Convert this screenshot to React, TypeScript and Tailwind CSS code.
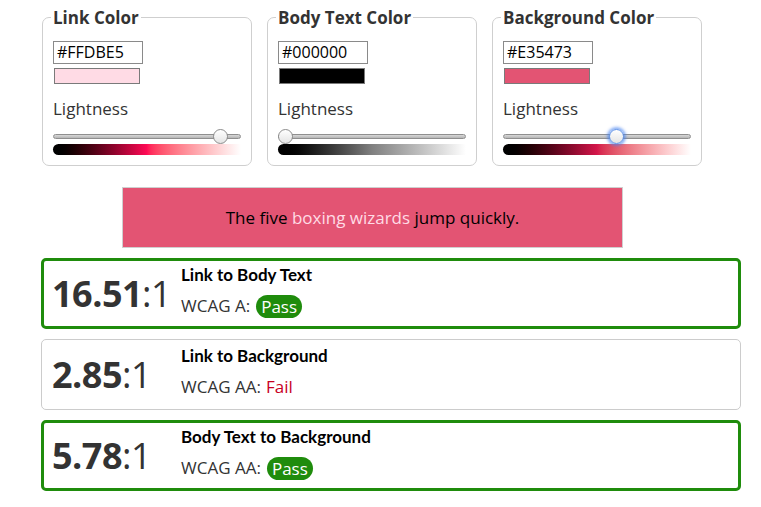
import React from "react";

type Box = {
  label: string;
  hex: string;
  swatch: string;
  grad: string;
  thumb: string;
  focus: boolean;
};

const boxes: Box[] = [
  {
    label: "Link Color",
    hex: "#FFDBE5",
    swatch: "bg-[#FFDBE5]",
    grad: "bg-linear-to-r from-black via-[#ff0a55] to-white",
    thumb: "left-[160px]",
    focus: false,
  },
  {
    label: "Body Text Color",
    hex: "#000000",
    swatch: "bg-black",
    grad: "bg-linear-to-r from-black via-[#808080] to-white",
    thumb: "left-0",
    focus: false,
  },
  {
    label: "Background Color",
    hex: "#E35473",
    swatch: "bg-[#E35473]",
    grad: "bg-linear-to-r from-black via-[#d4164a] to-white",
    thumb: "left-[106px]",
    focus: true,
  },
];

function ColorBox({ b }: { b: Box }) {
  return (
    <fieldset className="w-[210px] border border-[#cfcfcf] rounded-[7px] px-[10px] pb-[10px] pt-0 m-0">
      <legend className="px-[2px] -ml-[2px] text-[17px] leading-[23px] font-bold text-[#333]">
        {b.label}
      </legend>
      <div className="flex flex-col">
        <div className="mt-[12px] w-[90px] h-[23px] border border-[#8a8a8a] pl-[3px] text-[16px] leading-[21px] text-black">
          {b.hex}
        </div>
        <div className={`mt-[4px] ml-[1px] w-[86px] h-[16px] border border-[#7a7a7a] ${b.swatch}`} />
        <div className="mt-[13px] text-[17px] leading-[23px] text-[#333]">Lightness</div>
        <div className="relative mt-[9px] h-[15px] flex items-center">
          <div className="w-full h-[5px] rounded-full border border-[#8f8f8f] bg-linear-to-b from-[#d8d8d8] to-[#b5b5b5]" />
          {b.focus ? (
            <div
              className={`absolute top-0 ${b.thumb} w-[15px] h-[15px] rounded-full border border-[#5a8ee6] bg-linear-to-b from-white to-[#e4e4e4] shadow-[0_0_3px_2px_rgba(70,130,240,0.65)]`}
            />
          ) : (
            <div
              className={`absolute top-0 ${b.thumb} w-[15px] h-[15px] rounded-full border border-[#8c8c8c] bg-linear-to-b from-white to-[#e4e4e4]`}
            />
          )}
        </div>
        <div className={`mt-0 h-[11px] rounded-l-full ${b.grad}`} />
      </div>
    </fieldset>
  );
}

type Row = {
  big: string;
  title: string;
  level: string;
  pass: boolean;
};

const rows: Row[] = [
  { big: "16.51", title: "Link to Body Text", level: "WCAG A:", pass: true },
  { big: "2.85", title: "Link to Background", level: "WCAG AA:", pass: false },
  { big: "5.78", title: "Body Text to Background", level: "WCAG AA:", pass: true },
];

function ResultRow({ r }: { r: Row }) {
  return (
    <div
      className={
        r.pass
          ? "w-[700px] h-[71px] rounded-[5px] border-[3px] border-[#1f8c0c] flex items-stretch pl-[8px] pr-[8px]"
          : "w-[700px] h-[71px] rounded-[5px] border border-[#cccccc] flex items-stretch pl-[10px] pr-[10px]"
      }
    >
      <div className="w-[129px] flex items-center text-[#333] text-[36px] leading-none tracking-[-0.5px]">
        <span className="font-bold">{r.big}</span>
        <span>:1</span>
      </div>
      <div className={r.pass ? "flex flex-col pt-[4px]" : "flex flex-col pt-[6px]"}>
        <div className="font-['Lato',sans-serif] font-bold text-[17px] leading-[20px] text-black">
          {r.title}
        </div>
        <div className="mt-[9px] flex items-center text-[17px] leading-[24px] text-[#333]">
          <span>{r.level}</span>
          {r.pass ? (
            <span className="ml-[6px] rounded-full bg-[#1f8c0c] text-white px-[5px] h-[23px] leading-[23px]">
              Pass
            </span>
          ) : (
            <span className="ml-[5px] text-[#c8001e]">Fail</span>
          )}
        </div>
      </div>
    </div>
  );
}

export default function App() {
  return (
    <div className="w-[761px] h-[507px] bg-white font-['Open_Sans',sans-serif] text-[#333] overflow-hidden">
      <div className="pl-[42px] pt-[6px] flex gap-[15px]">
        {boxes.map((b) => (
          <ColorBox key={b.label} b={b} />
        ))}
      </div>
      <div className="ml-[122px] mt-[21px] w-[501px] h-[61px] border border-[#cfcfcf] bg-[#E35473] flex items-center justify-center text-[17px] text-black">
        <span>
          The five <span className="text-[#FFDBE5]">boxing wizards</span> jump quickly.
        </span>
      </div>
      <div className="ml-[41px] mt-[10px] flex flex-col gap-[10px]">
        {rows.map((r) => (
          <ResultRow key={r.title} r={r} />
        ))}
      </div>
    </div>
  );
}
